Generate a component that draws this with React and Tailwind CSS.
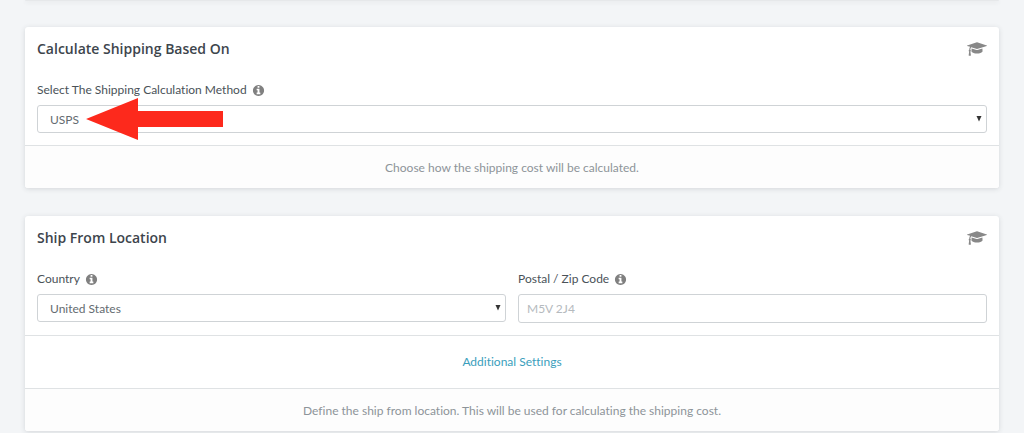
import React from "react";

function InfoIcon() {
  return (
    <svg viewBox="0 0 1792 1792" className="size-[13px] shrink-0 fill-[#808080]" aria-hidden="true">
      <path d="M1152 1376v-160q0-14-9-23t-23-9h-96v-512q0-14-9-23t-23-9h-320q-14 0-23 9t-9 23v160q0 14 9 23t23 9h96v320h-96q-14 0-23 9t-9 23v160q0 14 9 23t23 9h448q14 0 23-9t9-23zm-128-896v-160q0-14-9-23t-23-9h-192q-14 0-23 9t-9 23v160q0 14 9 23t23 9h192q14 0 23-9t9-23zm640 416q0 209-103 385.5t-279.5 279.5-385.5 103-385.5-103-279.5-279.5-103-385.5 103-385.5 279.5-279.5 385.5-103 385.5 103 279.5 279.5 103 385.5z" />
    </svg>
  );
}

function CapIcon() {
  return (
    <svg viewBox="0 0 2304 1792" className="h-4 w-5 fill-[#888888]" aria-hidden="true">
      <path d="M1774 836l18 316q4 69-82 128t-235 93.5-323 34.5-323-34.5-235-93.5-82-128l18-316 574 181q22 7 48 7t48-7zm530-324q0 23-22 31l-1120 352q-4 1-10 1t-10-1l-652-206q-43 34-71 111.5t-34 178.5q63 36 63 109 0 69-58 107l58 433q2 14-8 25-9 11-24 11h-192q-15 0-24-11-10-11-8-25l58-433q-58-38-58-107 0-73 65-111 11-207 98-330l-333-104q-22-8-22-31t22-31l1120-352q4-1 10-1t10 1l1120 352q22 8 22 31z" />
    </svg>
  );
}

function Card({ title, footer, extra, children }) {
  return (
    <section className="rounded-[3px] bg-white shadow-[0_1px_5px_rgba(50,60,70,0.16)]">
      <header className="flex items-center justify-between px-3 pt-3">
        <h2 className="font-['Open_Sans',sans-serif] text-sm leading-5 font-semibold text-[#3d454c]">{title}</h2>
        <button type="button" aria-label={`Learn about ${title}`}>
          <CapIcon />
        </button>
      </header>
      <div className="px-3 pt-[21px] pb-3">{children}</div>
      {extra}
      <p className="rounded-b-[3px] border-t border-[#dfe2e4] bg-[#fdfdfd] px-3 pt-3 pb-2.5 text-center leading-5 text-[#8d9499]">
        {footer}
      </p>
    </section>
  );
}

function Field({ id, label, children }) {
  return (
    <div className="min-w-0 flex-1">
      <div className="mb-[5px] flex items-center gap-[5px] leading-5">
        <label htmlFor={id} className="text-[#4a5258]">{label}</label>
        <InfoIcon />
      </div>
      {children}
    </div>
  );
}

function Select({ id, options }) {
  return (
    <div className="relative">
      <select id={id} className="block h-7 w-full appearance-none rounded-[3px] border border-[#cfd3d6] bg-white px-3 pt-px text-[#646b70]">
        {options.map((option) => (
          <option key={option}>{option}</option>
        ))}
      </select>
      <svg viewBox="0 0 6 6" className="pointer-events-none absolute top-[11px] right-[5px] size-1.5 fill-[#333333]" aria-hidden="true">
        <path d="M0.5 0h5L3 5.5z" />
      </svg>
    </div>
  );
}

export default function App() {
  return (
    <main className="min-h-screen bg-[#f3f5f7] font-['Lato','Open_Sans',sans-serif] text-xs [font-variant-ligatures:none]">
      <div className="h-0 px-[25px]">
        <div className="h-px rounded-b-[3px] bg-[#e6e8ea] shadow-[0_1px_4px_rgba(50,60,70,0.16)]" />
      </div>
      <div className="flex flex-col gap-7 px-[25px] pt-[27px]">
        <Card title="Calculate Shipping Based On" footer="Choose how the shipping cost will be calculated.">
          <Field id="method" label="Select The Shipping Calculation Method">
            <div className="relative">
              <Select id="method" options={["USPS"]} />
              <svg viewBox="0 0 138 42" className="pointer-events-none absolute -top-[7px] left-[49px] h-[42px] w-[138px] fill-[#fd291c]" aria-hidden="true">
                <path d="M0 21L52 0v13h85v16H52v13z" />
              </svg>
            </div>
          </Field>
        </Card>
        <Card
          title="Ship From Location"
          footer="Define the ship from location. This will be used for calculating the shipping cost."
          extra={
            <div className="border-t border-[#dfe2e4] pt-4 pb-4 text-center leading-5">
              <a href="#additional-settings" className="text-[#3a9ebc]">Additional Settings</a>
            </div>
          }
        >
          <div className="flex gap-3">
            <Field id="country" label="Country">
              <Select id="country" options={["United States"]} />
            </Field>
            <Field id="postal" label="Postal / Zip Code">
              <input
                id="postal"
                type="text"
                placeholder="M5V 2J4"
                className="block h-[29px] w-full rounded-[3px] border border-[#cfd3d6] bg-white px-2 text-[#646b70] placeholder:text-[#b5babe]"
              />
            </Field>
          </div>
        </Card>
      </div>
    </main>
  );
}
